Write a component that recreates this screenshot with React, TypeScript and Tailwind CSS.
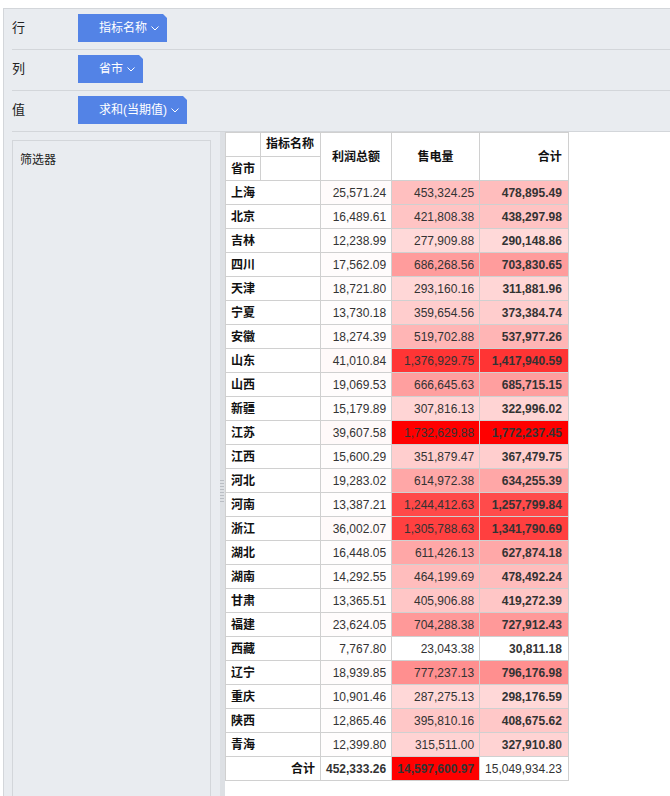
import { useMemo } from "react";

type Row = [string, number, number, number];

const rows: Row[] = [
  ["上海", 25571.24, 453324.25, 478895.49],
  ["北京", 16489.61, 421808.38, 438297.98],
  ["吉林", 12238.99, 277909.88, 290148.86],
  ["四川", 17562.09, 686268.56, 703830.65],
  ["天津", 18721.8, 293160.16, 311881.96],
  ["宁夏", 13730.18, 359654.56, 373384.74],
  ["安徽", 18274.39, 519702.88, 537977.26],
  ["山东", 41010.84, 1376929.75, 1417940.59],
  ["山西", 19069.53, 666645.63, 685715.15],
  ["新疆", 15179.89, 307816.13, 322996.02],
  ["江苏", 39607.58, 1732629.88, 1772237.45],
  ["江西", 15600.29, 351879.47, 367479.75],
  ["河北", 19283.02, 614972.38, 634255.39],
  ["河南", 13387.21, 1244412.63, 1257799.84],
  ["浙江", 36002.07, 1305788.63, 1341790.69],
  ["湖北", 16448.05, 611426.13, 627874.18],
  ["湖南", 14292.55, 464199.69, 478492.24],
  ["甘肃", 13365.51, 405906.88, 419272.39],
  ["福建", 23624.05, 704288.38, 727912.43],
  ["西藏", 7767.8, 23043.38, 30811.18],
  ["辽宁", 18939.85, 777237.13, 796176.98],
  ["重庆", 10901.46, 287275.13, 298176.59],
  ["陕西", 12865.46, 395810.16, 408675.62],
  ["青海", 12399.8, 315511.0, 327910.8],
];

const fmt = (n: number) =>
  n.toLocaleString("en-US", { minimumFractionDigits: 2, maximumFractionDigits: 2 });

// white -> red
function heat(v: number, min: number, max: number) {
  const t = Math.max(0, Math.min(1, (v - min) / (max - min)));
  const g = Math.round(255 * (1 - t));
  return `rgb(255, ${g}, ${g})`;
}

function Chevron() {
  return (
    <svg width="8" height="5" viewBox="0 0 8 5" className="ml-[4px]">
      <polyline points="0.5,0.5 4,4 7.5,0.5" fill="none" stroke="white" strokeWidth="1" />
    </svg>
  );
}

function Pill({ label }: { label: string }) {
  return (
    <div className="flex h-[28px] items-center bg-[#5383e6] pl-[21px] pr-[8px] text-[12px] text-white [clip-path:polygon(0_0,calc(100%-4px)_0,100%_4px,100%_100%,0_100%)]">
      {label}
      <Chevron />
    </div>
  );
}

function FieldRow({ name, pill }: { name: string; pill: string }) {
  return (
    <div className="ml-2 flex h-[41px] border-b border-[#d3d6da] pt-[5px]">
      <div className="flex h-[27px] w-[66px] items-center text-[13px] text-[#222]">{name}</div>
      <Pill label={pill} />
    </div>
  );
}

const cell = "border border-[#d0d0d0] px-[5px] h-[24px] p-0 whitespace-nowrap";

export default function App() {
  const ranges = useMemo(() => {
    const sale = rows.map((r) => r[2]);
    const total = rows.map((r) => r[3]);
    return {
      sale: [Math.min(...sale), Math.max(...sale)],
      total: [Math.min(...total), Math.max(...total)],
    };
  }, []);

  return (
    <div className="h-[796px] w-[670px] overflow-hidden bg-white pl-[3px] pt-2 font-['Liberation_Sans','Noto_Sans_CJK_SC',sans-serif]">
      <div className="flex h-full flex-col border-l border-t border-[#d3d6da] bg-[#e9ecf0]">
        <FieldRow name="行" pill="指标名称" />
        <FieldRow name="列" pill="省市" />
        <FieldRow name="值" pill="求和(当期值)" />

        <div className="flex min-h-0 flex-1">
          <div className="w-[216px] pl-2 pr-[9px] pt-2">
            <div className="h-[700px] border border-[#d3d6da] pl-[7px] pt-[10px] text-[12px] text-[#222]">
              筛选器
            </div>
          </div>
          <div className="flex w-[5px] flex-col gap-[2px] bg-[#dde0e4] pt-[348px]">
            {[0, 1, 2, 3, 4, 5, 6, 7].map((i) => (
              <div key={i} className="h-px w-[4px] bg-[#b9bdc3]" />
            ))}
          </div>
          <div className="flex-1 bg-white">
            <table className="table-fixed border-collapse text-[12px] text-[#333]">
              <colgroup>
                <col className="w-[35px]" />
                <col className="w-[60px]" />
                <col className="w-[71px]" />
                <col className="w-[88px]" />
                <col className="w-[88px]" />
              </colgroup>
              <thead>
                <tr className="h-[24px]">
                  <td className={cell}></td>
                  <td className={`${cell} align-top pt-[2px] font-bold text-[#111]`}>指标名称</td>
                  <td rowSpan={2} className={`${cell} text-center font-bold text-[#111]`}>利润总额</td>
                  <td rowSpan={2} className={`${cell} text-center font-bold text-[#111]`}>售电量</td>
                  <td rowSpan={2} className={`${cell} pr-[6px] text-right font-bold text-[#111]`}>合计</td>
                </tr>
                <tr className="h-[24px]">
                  <td className={`${cell} font-bold text-[#111]`}>省市</td>
                  <td className={cell}></td>
                </tr>
              </thead>
              <tbody>
                {rows.map(([name, profit, sale, total]) => (
                  <tr key={name} className="h-[24px]">
                    <td colSpan={2} className={`${cell} font-bold text-[#111]`}>{name}</td>
                    <td className={`${cell} text-right`} style={{ background: heat(profit, 0, 1732629.88) }}>
                      {fmt(profit)}
                    </td>
                    <td className={`${cell} text-right`} style={{ background: heat(sale, ranges.sale[0], ranges.sale[1]) }}>
                      {fmt(sale)}
                    </td>
                    <td
                      className={`${cell} pr-[6px] text-right font-bold`}
                      style={{ background: heat(total, ranges.total[0], ranges.total[1]) }}
                    >
                      {fmt(total)}
                    </td>
                  </tr>
                ))}
                <tr className="h-[24px]">
                  <td colSpan={2} className={`${cell} text-right font-bold text-[#111]`}>合计</td>
                  <td className={`${cell} text-right font-bold`}>452,333.26</td>
                  <td className={`${cell} bg-[#ff0000] text-right font-bold`}>14,597,600.97</td>
                  <td className={`${cell} pr-[6px] text-right`}>15,049,934.23</td>
                </tr>
              </tbody>
            </table>
          </div>
        </div>
      </div>
    </div>
  );
}
